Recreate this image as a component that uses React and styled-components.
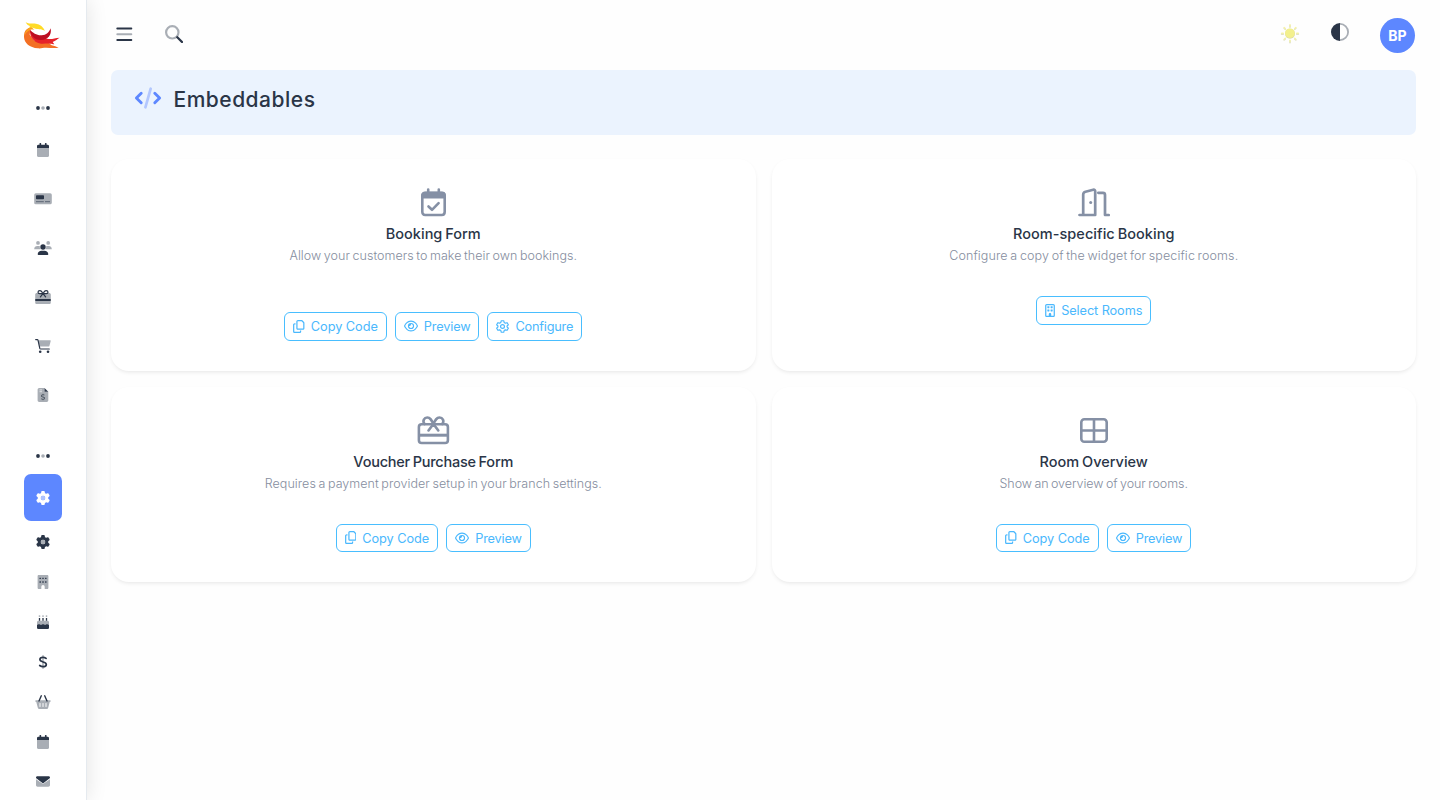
import React from 'react';
import styled, { createGlobalStyle, css } from 'styled-components';
import { FaGear, FaDollarSign, FaRegEye, FaRegBuilding, FaRegCopy } from 'react-icons/fa6';

const ink = '#2a3547';
const soft = '#a9aeb5';
const primary = '#5d87ff';
const info = '#49beff';
const slate = '#8590a5';

const GlobalStyle = createGlobalStyle`
  * { box-sizing: border-box; }
  body {
    margin: 0;
    background: #fefefe;
    color: ${ink};
    font-family: Inter, "Liberation Sans", sans-serif;
    overflow: hidden;
  }
  svg { display: block; flex: none; }
`;

const Shell = styled.div`
  display: flex;
  height: 800px;
  overflow: hidden;
`;

const Sidebar = styled.aside`
  display: flex;
  flex-direction: column;
  align-items: center;
  flex: none;
  width: 87px;
  background: #fff;
  border-right: 1px solid #e5eaef;
  box-shadow: 0 0 20px rgba(0, 0, 0, 0.11);
`;

const Brand = styled.div`
  display: flex;
  flex: none;
  align-items: center;
  justify-content: center;
  height: 70px;
  padding-right: 2px;
`;

const NavSection = styled.div`
  display: flex;
  flex: none;
  align-items: center;
  height: ${(p) => p.$height}px;
  padding-top: ${(p) => p.$top}px;
`;

const NavItem = styled.a`
  display: flex;
  flex: none;
  align-items: center;
  justify-content: center;
  width: 38px;
  height: ${(p) => (p.$compact ? 40 : 49)}px;
  ${(p) =>
    p.$active &&
    css`
      height: 47px;
      margin-bottom: 1px;
      border-radius: 7px;
      background: ${primary};
      color: #fff;
    `}
`;

const Main = styled.main`
  flex: 1;
  padding: 0 24px;
`;

const TopBar = styled.header`
  display: flex;
  justify-content: space-between;
  height: 70px;
`;

const TopGroup = styled.div`
  display: flex;
  align-items: flex-start;
`;

const IconButton = styled.button`
  display: flex;
  padding: 0;
  border: 0;
  background: none;
  color: inherit;
  margin: ${(p) => p.$margin};
`;

const Avatar = styled.div`
  display: flex;
  align-items: center;
  justify-content: center;
  width: 35px;
  height: 35px;
  margin: 18px 1px 0 31px;
  border-radius: 50%;
  background: ${primary};
  color: #fff;
  font-size: 14px;
  font-weight: 700;
  letter-spacing: 0;
`;

const Banner = styled.section`
  display: flex;
  align-items: flex-start;
  gap: 11.5px;
  height: 65px;
  padding: 15px 23px;
  border-radius: 7px;
  background: #ebf3fe;
`;

const BannerIcon = styled.div`
  display: flex;
  padding-top: 2px;
`;

const PageTitle = styled.h1`
  margin: 1px 0 0;
  font-size: 21px;
  font-weight: 500;
  line-height: 28px;
  letter-spacing: 0.5px;
`;

const Grid = styled.div`
  display: grid;
  grid-template-columns: 1fr 1fr;
  gap: 16px;
  padding-top: 24px;
`;

const Card = styled.article`
  display: flex;
  flex-direction: column;
  align-items: center;
  padding: 29px 16px 30px;
  border-radius: 18px;
  background: #fff;
  box-shadow: 0 2px 4px -1px rgba(0, 0, 0, 0.1);
`;

const CardIcon = styled.div`
  display: flex;
  height: 35px;
`;

const CardTitle = styled.h2`
  margin: 0;
  font-size: 14.5px;
  font-weight: 500;
  line-height: 22px;
  letter-spacing: ${(p) => p.$track}px;
  word-spacing: -1px;
`;

const CardText = styled.p`
  margin: 0 0 ${(p) => (p.$roomy ? 45 : 29)}px;
  color: #858d9e;
  font-size: 12.5px;
  font-weight: 300;
  line-height: 22px;
  letter-spacing: ${(p) => p.$track}px;
  word-spacing: -1px;
`;

const Actions = styled.div`
  display: flex;
  gap: 8px;
`;

const Action = styled.button`
  display: flex;
  align-items: center;
  gap: 6px;
  height: 28.5px;
  padding: 0 8px;
  border: 1px solid ${info};
  border-radius: 6px;
  background: transparent;
  color: #4ab8fd;
  font-family: inherit;
  font-size: 12.75px;
  line-height: 18px;
  letter-spacing: ${(p) => p.$track}px;
  white-space: nowrap;
`;

const ActionLabel = styled.span`
  padding-top: 2px;
`;

const CopyIcon = styled(FaRegCopy)`
  width: 11.5px;
  height: 13px;
`;

const OfficeIcon = styled(FaRegBuilding)`
  width: 10px;
  height: 13px;
`;

const Logo = () => (
  <svg width="36" height="27" viewBox="72 64 108 81">
    <path d="M92 80C78 84 71 94 72 109c1 18 16 32 42 34 10 1 14-2 24-2 13 0 25 3 38 0-7-3-13-5-21-7l-12-9-40-5-14-18z" fill="#f36f24" />
    <path d="M90 88c-1 20 10 37 33 41 8 1 18-1 26 0 6 0 10 2 14 2l-5-7c9-4 14-9 21-13-12 0-20 4-30 4-5 0-9-1-12-4l-27 3z" fill="#e62129" />
    <path d="M90 88c2 17 14 31 33 30 20 0 33-14 29-35-5 13-13 20-27 21-15 1-26-8-35-16z" fill="#bd0f22" />
    <path d="M94 78c-12 5-20 15-21 29 4-11 9-16 17-19 4-2 8-2 13 0z" fill="#fba31b" />
    <path d="M77 65c10 6 19 2 31 4 12 2 22 9 27 22-9-7-18-4-28-7-7-2-14-5-21-4l5-3c-7-2-11-6-14-12z" fill="#ffdb26" />
  </svg>
);

const Dots = () => (
  <svg width="14" height="4" viewBox="0 0 14 4">
    <circle cx="2" cy="2" r="1.9" fill={ink} />
    <circle cx="7" cy="2" r="1.8" fill={soft} />
    <circle cx="12" cy="2" r="1.9" fill={ink} />
  </svg>
);

const CalendarIcon = () => (
  <svg width="12" height="14" viewBox=".5 0 12 14">
    <path d="M.4 5h12.200v7.500c0 .8-.7 1.500-1.500 1.500H1.900c-.8 0-1.500-.7-1.500-1.500z" fill={soft} />
    <path d="M3 .8a.8.8 0 0 1 1.700 0v1h3.700v-1a.8.8 0 0 1 1.700 0v1h1c.8 0 1.500.7 1.500 1.500V5H.4V3.300c0-.8.7-1.500 1.500-1.500H3z" fill={ink} />
  </svg>
);

const MoneyCardIcon = () => (
  <svg width="18" height="12" viewBox="0 0 18 12">
    <rect x=".2" y=".3" width="17.600" height="11" rx="1.600" fill={soft} />
    <rect x="2" y="2.200" width="8" height="4" rx=".8" fill={ink} />
    <path d="M2 8.700h7.800M11 8.700h5" stroke={ink} strokeWidth=".8" opacity=".75" />
  </svg>
);

const UsersIcon = () => (
  <svg width="18" height="14" viewBox="0 0 18 14">
    <g fill={soft}>
      <circle cx="4" cy="1.900" r="1.900" />
      <circle cx="14.200" cy="1.900" r="1.900" />
      <path d="M.2 8.200C.2 6.200 1.600 5 3.200 5h1.500c.6 0 .9.100 1.200.3-.3 1.200 0 2.200.9 3H.6zM17.800 8.200c0-2-1.400-3.200-3-3.200h-1.500c-.6 0-.9.100-1.200.3.300 1.200 0 2.200-.9 3h6.200z" />
    </g>
    <circle cx="9" cy="6" r="2.700" fill={ink} />
    <path d="M3.700 13.300C3.700 11 5.500 9.700 7.500 9.700h3c2 0 3.800 1.300 3.800 3.600 0 .4-.3.700-.7.700H4.400c-.4 0-.7-.3-.7-.7z" fill={ink} />
  </svg>
);

const GiftCardIcon = () => (
  <svg width="16" height="14" viewBox="0 .3 16 14">
    <path d="M1.700 3.300h12.600c.8 0 1.500.7 1.500 1.500v4.400H.2V4.800c0-.8.700-1.500 1.500-1.500zM.2 11.300h15.600v1.400c0 .9-.7 1.600-1.500 1.600H1.700c-.8 0-1.500-.7-1.500-1.600z" fill={soft} />
    <path d="M.2 9.300h15.600v2H.2z" fill={ink} />
    <path d="M8 4C6.500.8 5.700 1 4.900 1 3.800 1 3 1.700 3 2.600 3 3.600 3.800 4 4.700 4zm0 0C9.500.8 10.300 1 11.100 1c1.100 0 1.900.7 1.900 1.600 0 1-.8 1.400-1.700 1.400zM8 4 5.400 7.200M8 4l2.600 3.200" fill="none" stroke={ink} strokeWidth="1.200" strokeLinecap="round" />
  </svg>
);

const CartIcon = () => (
  <svg width="16" height="14" viewBox="0 0 16 14">
    <path d="M3.300 1.200h11.900c.4 0 .6.300.5.700l-1.300 5c-.2.500-.5.700-1 .7H4.700z" fill={soft} />
    <path d="M.7.600h1.500c.4 0 .7.200.8.600l1.800 8.200c.1.400.4.600.8.600h8.700" fill="none" stroke={ink} strokeWidth="1.200" strokeLinecap="round" />
    <circle cx="5.200" cy="12.700" r="1.300" fill={ink} />
    <circle cx="13" cy="12.700" r="1.300" fill={ink} />
  </svg>
);

const InvoiceIcon = () => (
  <svg width="12" height="14" viewBox="-.5 0 12 14">
    <path d="M1.700 0H7v3.700h3.800v8.600c0 .9-.7 1.700-1.600 1.700H1.700C.8 14 .1 13.200.1 12.300V1.700C.1.800.8 0 1.700 0z" fill={soft} />
    <path d="M7 0l3.800 3.700H7z" fill={ink} />
    <path d="M2 1.900h2.500M2 3.700h2.500" stroke="#e3e5e8" strokeWidth=".9" />
    <FaDollarSign x="2" y="5.500" size={7} color="#49525f" />
  </svg>
);

const GearIcon = ({ center = soft }) => (
  <svg width="14" height="14" viewBox="0 0 14 14">
    <FaGear size={14} />
    <circle cx="7" cy="7" r="2.300" fill={center} />
  </svg>
);

const BuildingIcon = () => (
  <svg width="12" height="14" viewBox="-.5 0 12 14">
    <path d="M1.300 0h8.400c.7 0 1.200.5 1.200 1.300v11.400c0 .8-.5 1.300-1.200 1.300H7.200v-2.200a1.700 1.700 0 0 0-3.400 0V14H1.300C.6 14 .1 13.500.1 12.700V1.300C.1.500.6 0 1.300 0z" fill={soft} />
    <g fill={ink}>
      {[2.7, 6.3].map((y) => [2, 4.8, 7.6].map((x) => <rect key={`${x}-${y}`} x={x} y={y} width="1.400" height="1.400" rx=".3" />))}
    </g>
  </svg>
);

const CakeIcon = () => (
  <svg width="12" height="14" viewBox=".5 0 12 14">
    <g fill={soft}>
      {[3, 6.5, 10].map((x) => <circle key={x} cx={x} cy="1.100" r=".9" />)}
      <path d="M2.200 5.800h8.600c1 0 1.800.7 1.800 1.700v3H.4v-3c0-1 .8-1.700 1.800-1.700z" />
    </g>
    <path d="M3 3v2.800M6.500 3v2.800M10 3v2.800" stroke={ink} strokeWidth="1.300" />
    <path d="M.4 10c1 0 1.400-.7 2-.7s1.300.7 2.100.7 1.300-.7 2-.7 1.300.7 2.100.7 1.300-.7 2-.7 1 .7 2 .7v2.600c0 .8-.6 1.400-1.400 1.400H1.800c-.8 0-1.400-.6-1.400-1.400z" fill={ink} />
  </svg>
);

const DollarIcon = () => (
  <svg width="10" height="14" viewBox="0 0 10 14">
    <path d="M5 .8v12.400" stroke={soft} strokeWidth="1.500" strokeLinecap="round" />
    <path d="M8.100 3.400C7.200 2.700 6.200 2.400 5 2.400c-1.900 0-3.100.8-3.100 2.200C1.900 7.700 8.300 6.200 8.300 9.400c0 1.500-1.300 2.300-3.200 2.300-1.300 0-2.500-.5-3.400-1.200" fill="none" stroke={ink} strokeWidth="1.700" strokeLinecap="round" />
  </svg>
);

const BasketIcon = () => (
  <svg width="16" height="14" viewBox="0 0 16 14">
    <path d="M.9 5.300h14.200c.8 0 .8 1.500 0 1.600h-.4l-1.500 5.900c-.2.800-.8 1.200-1.500 1.200H4.300c-.8 0-1.300-.4-1.500-1.200L1.300 6.900H.9c-.8-.1-.8-1.600 0-1.600z" fill={soft} />
    <path d="M5 8.500v3M8 8.500v3M11 8.500v3" stroke="#fff" strokeWidth="1" strokeLinecap="round" />
    <path d="M6.300.8 4 6M9.700.8 12 6" stroke={ink} strokeWidth="1.400" strokeLinecap="round" />
  </svg>
);

const MailIcon = () => (
  <svg width="14" height="12" viewBox="0 0 14 12">
    <path d="M0 3.200 6.300 7.600c.5.300.9.300 1.400 0L14 3.200v5.900c0 1-.7 1.700-1.700 1.700H1.700C.7 10.800 0 10.100 0 9.100z" fill={soft} />
    <path d="M1.300.2h11.400c.7 0 1.300.6 1.300 1.300 0 .5-.2.900-.6 1.100L7.600 7.100c-.4.300-.8.300-1.200 0L.6 2.600C.2 2.400 0 2 0 1.500 0 .8.600.2 1.300.2z" fill={ink} />
  </svg>
);

const MenuIcon = () => (
  <svg width="17" height="15" viewBox="0 0 17 15">
    <path d="M1.300 1.500h14M1.300 13h14" stroke={ink} strokeWidth="2" strokeLinecap="round" />
    <path d="M1.300 7.200h14" stroke={soft} strokeWidth="2" strokeLinecap="round" />
  </svg>
);

const SearchIcon = () => (
  <svg width="18" height="18" viewBox="0 0 18 18">
    <circle cx="7.300" cy="7.300" r="6.200" fill="none" stroke={soft} strokeWidth="2.200" />
    <path d="m12.300 12.300 4.700 4.700" stroke={ink} strokeWidth="2.300" strokeLinecap="round" />
  </svg>
);

const SunIcon = () => (
  <svg width="20" height="20" viewBox="0 .5 20 20">
    <path d="M10 2v1.600M10 17.400V19M1.700 10.500h1.500M16.800 10.500h1.500M4.200 4.700l1 1M14.800 15.300l1 1M4.200 16.300l1-1M14.800 5.700l1-1" stroke="#e2e2c6" strokeWidth="1.800" strokeLinecap="round" />
    <path d="M10 1.200v1.600M10 16.700v1.400M1.700 9.700h1.500M16.800 9.700h1.500M4.200 4l1 1M14.800 14.600l1 1M4.200 15.600l1-1M14.800 5l1-1" stroke="#f7f5a6" strokeWidth="1.300" strokeLinecap="round" />
    <circle cx="10" cy="10.300" r="5" fill="#dedca8" />
    <circle cx="9.900" cy="9.700" r="4.800" fill="#f3f08c" />
  </svg>
);

const ContrastIcon = () => (
  <svg width="18" height="18" viewBox="0 0 18 18">
    <path d="M9 .9a8.100 8.100 0 0 1 0 16.200" fill="none" stroke={soft} strokeWidth="1.800" />
    <path d="M9 0a9 9 0 0 0 0 18z" fill={ink} />
  </svg>
);

const CodeIcon = () => (
  <svg width="28" height="22" viewBox="0 0 28 22" fill="none" strokeLinecap="round" strokeLinejoin="round">
    <path d="M7.200 6.300 2.400 11l4.800 4.700M20.800 6.300l4.800 4.700-4.800 4.700" stroke={primary} strokeWidth="2.900" />
    <path d="M16.700 1.700 11.400 20.300" stroke="#b3c7fe" strokeWidth="2.700" />
  </svg>
);

const bigIcon = { fill: 'none', stroke: slate, strokeWidth: 2.6, strokeLinecap: 'round', strokeLinejoin: 'round' };

const CalendarCheck = () => (
  <svg width="25" height="29" viewBox=".5 0 25 29" {...bigIcon}>
    <path d="M4.800 4.800h16.400c2 0 3 1.200 3 3v16c0 1.900-1 3.200-2.900 3.200H4.700c-1.900 0-2.900-1.300-2.900-3.200v-16c0-1.800 1-3 3-3z" />
    <path d="M2 9.300V7.500c0-1.500 1-2.400 2.500-2.400h17C23 5.100 24 6 24 7.500v1.800z" fill={slate} />
    <path d="M7.700 1.500v4M18.300 1.500v4M8 18.500l3.500 3.300 6.600-6.600" />
  </svg>
);

const DoorOpen = () => (
  <svg width="32" height="29" viewBox="0 0 32 29" {...bigIcon} strokeWidth="2.700">
    <path d="M1.500 27h15.700V3.500c0-1.300-.8-2-2-1.700L7.500 3.700c-1.500.4-2.300 1.300-2.300 2.800V27M20.300 4.800H25c1.300 0 2 .8 2 2V27h3.700" />
    <circle cx="12.700" cy="14.500" r="1.500" fill={slate} stroke="none" />
  </svg>
);

const GiftCard = () => (
  <svg width="33" height="29" viewBox="0 0 33 29" {...bigIcon}>
    <rect x="1.900" y="8.300" width="29" height="18.700" rx="2.800" />
    <path d="M2 19.200h29" strokeWidth="3" strokeLinecap="butt" />
    <path d="M7.600 8C5 4.800 7.300 1.500 10.300 1.500c2.800 0 4 2 6.100 6.500 2.100-4.500 3.300-6.500 6.100-6.500 3 0 5.300 3.300 2.700 6.500M16.400 8l-4.900 6.500M16.400 8l4.900 6.500" />
  </svg>
);

const TableIcon = () => (
  <svg width="28" height="29" viewBox="0 .5 28 29" {...bigIcon}>
    <rect x="1.300" y="3.800" width="25.400" height="22.400" rx="3" />
    <path d="M14 4v22M1.500 15h25" />
  </svg>
);

const GearOutline = () => (
  <svg width="13" height="13" viewBox="0 0 14 14" fill="none" stroke="currentColor" strokeWidth="1.250" strokeLinejoin="round">
    <path d="M5.700.8h2.600l.5 1.800 1.300.8 1.900-.5 1.300 2.300-1.400 1.300v1l1.400 1.400-1.300 2.200-1.900-.5-1.300.8-.5 1.800H5.700l-.5-1.800-1.300-.8-1.900.5L.7 8.900l1.400-1.400v-1L.7 5.200 2 2.900l1.900.5 1.300-.8z" />
    <circle cx="7" cy="7" r="2.100" />
  </svg>
);

const actions = {
  copy: { icon: <CopyIcon />, label: 'Copy Code', track: -0.05 },
  preview: { icon: <FaRegEye size={14} />, label: 'Preview', track: -0.17 },
  configure: { icon: <GearOutline />, label: 'Configure', track: -0.22 },
  rooms: { icon: <OfficeIcon />, label: 'Select Rooms', track: -0.1 },
};

const cards = [
  { Icon: CalendarCheck, title: 'Booking Form', titleTrack: 0, text: 'Allow your customers to make their own bookings.', textTrack: 0.04, roomy: true, actions: ['copy', 'preview', 'configure'] },
  { Icon: DoorOpen, title: 'Room-specific Booking', titleTrack: 0.05, text: 'Configure a copy of the widget for specific rooms.', textTrack: 0.11, actions: ['rooms'] },
  { Icon: GiftCard, title: 'Voucher Purchase Form', titleTrack: -0.22, text: 'Requires a payment provider setup in your branch settings.', textTrack: 0.05, actions: ['copy', 'preview'] },
  { Icon: TableIcon, title: 'Room Overview', titleTrack: 0, text: 'Show an overview of your rooms.', textTrack: -0.05, actions: ['copy', 'preview'] },
];

const mainNav = [CalendarIcon, MoneyCardIcon, UsersIcon, GiftCardIcon, CartIcon, InvoiceIcon];
const settingsNav = [GearIcon, BuildingIcon, CakeIcon, DollarIcon, BasketIcon, CalendarIcon, MailIcon];

export default function App() {
  return (
    <>
      <GlobalStyle />
      <Shell>
        <Sidebar>
          <Brand><Logo /></Brand>
          <NavSection $height={55} $top={21}><Dots /></NavSection>
          {mainNav.map((Icon, i) => <NavItem key={i}><Icon /></NavItem>)}
          <NavSection $height={55} $top={19}><Dots /></NavSection>
          <NavItem $active><GearIcon center="#aec3ff" /></NavItem>
          {settingsNav.map((Icon, i) => <NavItem key={i} $compact><Icon /></NavItem>)}
        </Sidebar>
        <Main>
          <TopBar>
            <TopGroup>
              <IconButton $margin="27px 0 0 5px" aria-label="Menu"><MenuIcon /></IconButton>
              <IconButton $margin="25px 0 0 32px" aria-label="Search"><SearchIcon /></IconButton>
            </TopGroup>
            <TopGroup>
              <IconButton $margin="24px 0 0" aria-label="Light theme"><SunIcon /></IconButton>
              <IconButton $margin="23px 0 0 31px" aria-label="Contrast"><ContrastIcon /></IconButton>
              <Avatar>BP</Avatar>
            </TopGroup>
          </TopBar>
          <Banner>
            <BannerIcon><CodeIcon /></BannerIcon>
            <PageTitle>Embeddables</PageTitle>
          </Banner>
          <Grid>
            {cards.map(({ Icon, ...card }) => (
              <Card key={card.title}>
                <CardIcon><Icon /></CardIcon>
                <CardTitle $track={card.titleTrack}>{card.title}</CardTitle>
                <CardText $track={card.textTrack} $roomy={card.roomy}>{card.text}</CardText>
                <Actions>
                  {card.actions.map((name) => (
                    <Action key={name} $track={actions[name].track}>
                      {actions[name].icon}
                      <ActionLabel>{actions[name].label}</ActionLabel>
                    </Action>
                  ))}
                </Actions>
              </Card>
            ))}
          </Grid>
        </Main>
      </Shell>
    </>
  );
}
